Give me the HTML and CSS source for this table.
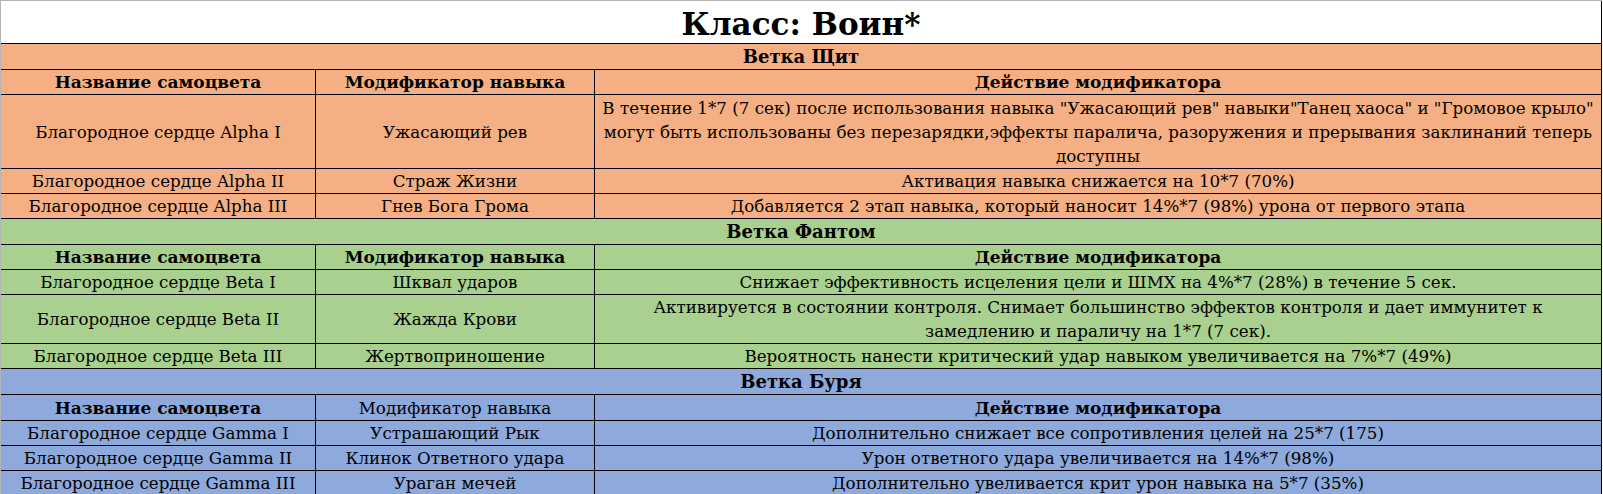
FILE: index.html
```html
<!DOCTYPE html>
<html lang="ru">
<head>
<meta charset="utf-8">
<title>Класс: Воин</title>
<link rel="stylesheet" href="styles.css">
</head>
<body>
<div class="sheet">
  <div class="title">Класс: Воин*</div>

  <section class="branch shield">
    <div class="branch-name">Ветка Щит</div>
    <div class="row head">
      <div class="cell">Название самоцвета</div>
      <div class="cell">Модификатор навыка</div>
      <div class="cell">Действие модификатора</div>
    </div>
    <div class="row">
      <div class="cell">Благородное сердце Alpha I</div>
      <div class="cell">Ужасающий рев</div>
      <div class="cell multi tall">В течение 1*7 (7 сек) после использования навыка "Ужасающий рев" навыки"Танец хаоса" и "Громовое крыло"<br>могут быть использованы без перезарядки,эффекты паралича, разоружения и прерывания заклинаний теперь<br>доступны</div>
    </div>
    <div class="row">
      <div class="cell">Благородное сердце Alpha II</div>
      <div class="cell">Страж Жизни</div>
      <div class="cell">Активация навыка снижается на 10*7 (70%)</div>
    </div>
    <div class="row">
      <div class="cell">Благородное сердце Alpha III</div>
      <div class="cell">Гнев Бога Грома</div>
      <div class="cell">Добавляется 2 этап навыка, который наносит 14%*7 (98%) урона от первого этапа</div>
    </div>
  </section>

  <section class="branch phantom">
    <div class="branch-name">Ветка Фантом</div>
    <div class="row head">
      <div class="cell">Название самоцвета</div>
      <div class="cell">Модификатор навыка</div>
      <div class="cell">Действие модификатора</div>
    </div>
    <div class="row">
      <div class="cell">Благородное сердце Beta I</div>
      <div class="cell">Шквал ударов</div>
      <div class="cell">Снижает эффективность исцеления цели и ШМХ на 4%*7 (28%) в течение 5 сек.</div>
    </div>
    <div class="row">
      <div class="cell">Благородное сердце Beta II</div>
      <div class="cell">Жажда Крови</div>
      <div class="cell multi">Активируется в состоянии контроля. Снимает большинство эффектов контроля и дает иммунитет к<br>замедлению и параличу на 1*7 (7 сек).</div>
    </div>
    <div class="row">
      <div class="cell">Благородное сердце Beta III</div>
      <div class="cell">Жертвоприношение</div>
      <div class="cell">Вероятность нанести критический удар навыком увеличивается на 7%*7 (49%)</div>
    </div>
  </section>

  <section class="branch storm">
    <div class="branch-name">Ветка Буря</div>
    <div class="row head head-tall">
      <div class="cell">Название самоцвета</div>
      <div class="cell plain">Модификатор навыка</div>
      <div class="cell">Действие модификатора</div>
    </div>
    <div class="row">
      <div class="cell">Благородное сердце Gamma I</div>
      <div class="cell">Устрашающий Рык</div>
      <div class="cell">Дополнительно снижает все сопротивления целей на 25*7 (175)</div>
    </div>
    <div class="row">
      <div class="cell">Благородное сердце Gamma II</div>
      <div class="cell">Клинок Ответного удара</div>
      <div class="cell">Урон ответного удара увеличивается на 14%*7 (98%)</div>
    </div>
    <div class="row">
      <div class="cell">Благородное сердце Gamma III</div>
      <div class="cell">Ураган мечей</div>
      <div class="cell">Дополнительно увеливается крит урон навыка на 5*7 (35%)</div>
    </div>
  </section>
</div>
</body>
</html>
```
FILE: styles.css
```css
* {
  box-sizing: border-box;
}

html, body {
  margin: 0;
  padding: 0;
  background: #ffffff;
}

body {
  font-family: "DejaVu Serif", "Liberation Serif", serif;
  color: #000000;
  font-size: 16.7px;
}

.sheet {
  width: 1602px;
  border-top: 1px solid #b4b4b4;
  border-left: 1px solid #b4b4b4;
}

.title {
  height: 43px;
  padding-top: 5px;
  line-height: 37px;
  font-size: 31px;
  font-weight: bold;
  text-align: center;
  border-bottom: 1px solid #000;
  border-right: 1px solid #000;
  background: #ffffff;
}

.shield { background: #f4b084; }
.phantom { background: #a9d08e; }
.storm { background: #8ea9db; }

.branch-name {
  height: 26px;
  padding-top: 1px;
  line-height: 24px;
  font-size: 18px;
  font-weight: bold;
  text-align: center;
  border-bottom: 1px solid #000;
  border-right: 1px solid #000;
}

.row {
  display: grid;
  grid-template-columns: 315px 279px 1007px;
}

.cell {
  display: flex;
  align-items: center;
  justify-content: center;
  text-align: center;
  min-height: 25px;
  line-height: 23px;
  padding: 1px 2px 0;
  border-right: 1px solid #000;
  border-bottom: 1px solid #000;
  white-space: nowrap;
}

.head .cell {
  font-weight: bold;
  font-size: 17px;
}

.head .cell.plain {
  font-weight: normal;
  font-size: 16.7px;
}

.head-tall .cell {
  min-height: 26px;
}

.multi {
  padding-top: 0;
  line-height: 24px;
}

.tall {
  min-height: 74px;
  padding-top: 1px;
}
```
